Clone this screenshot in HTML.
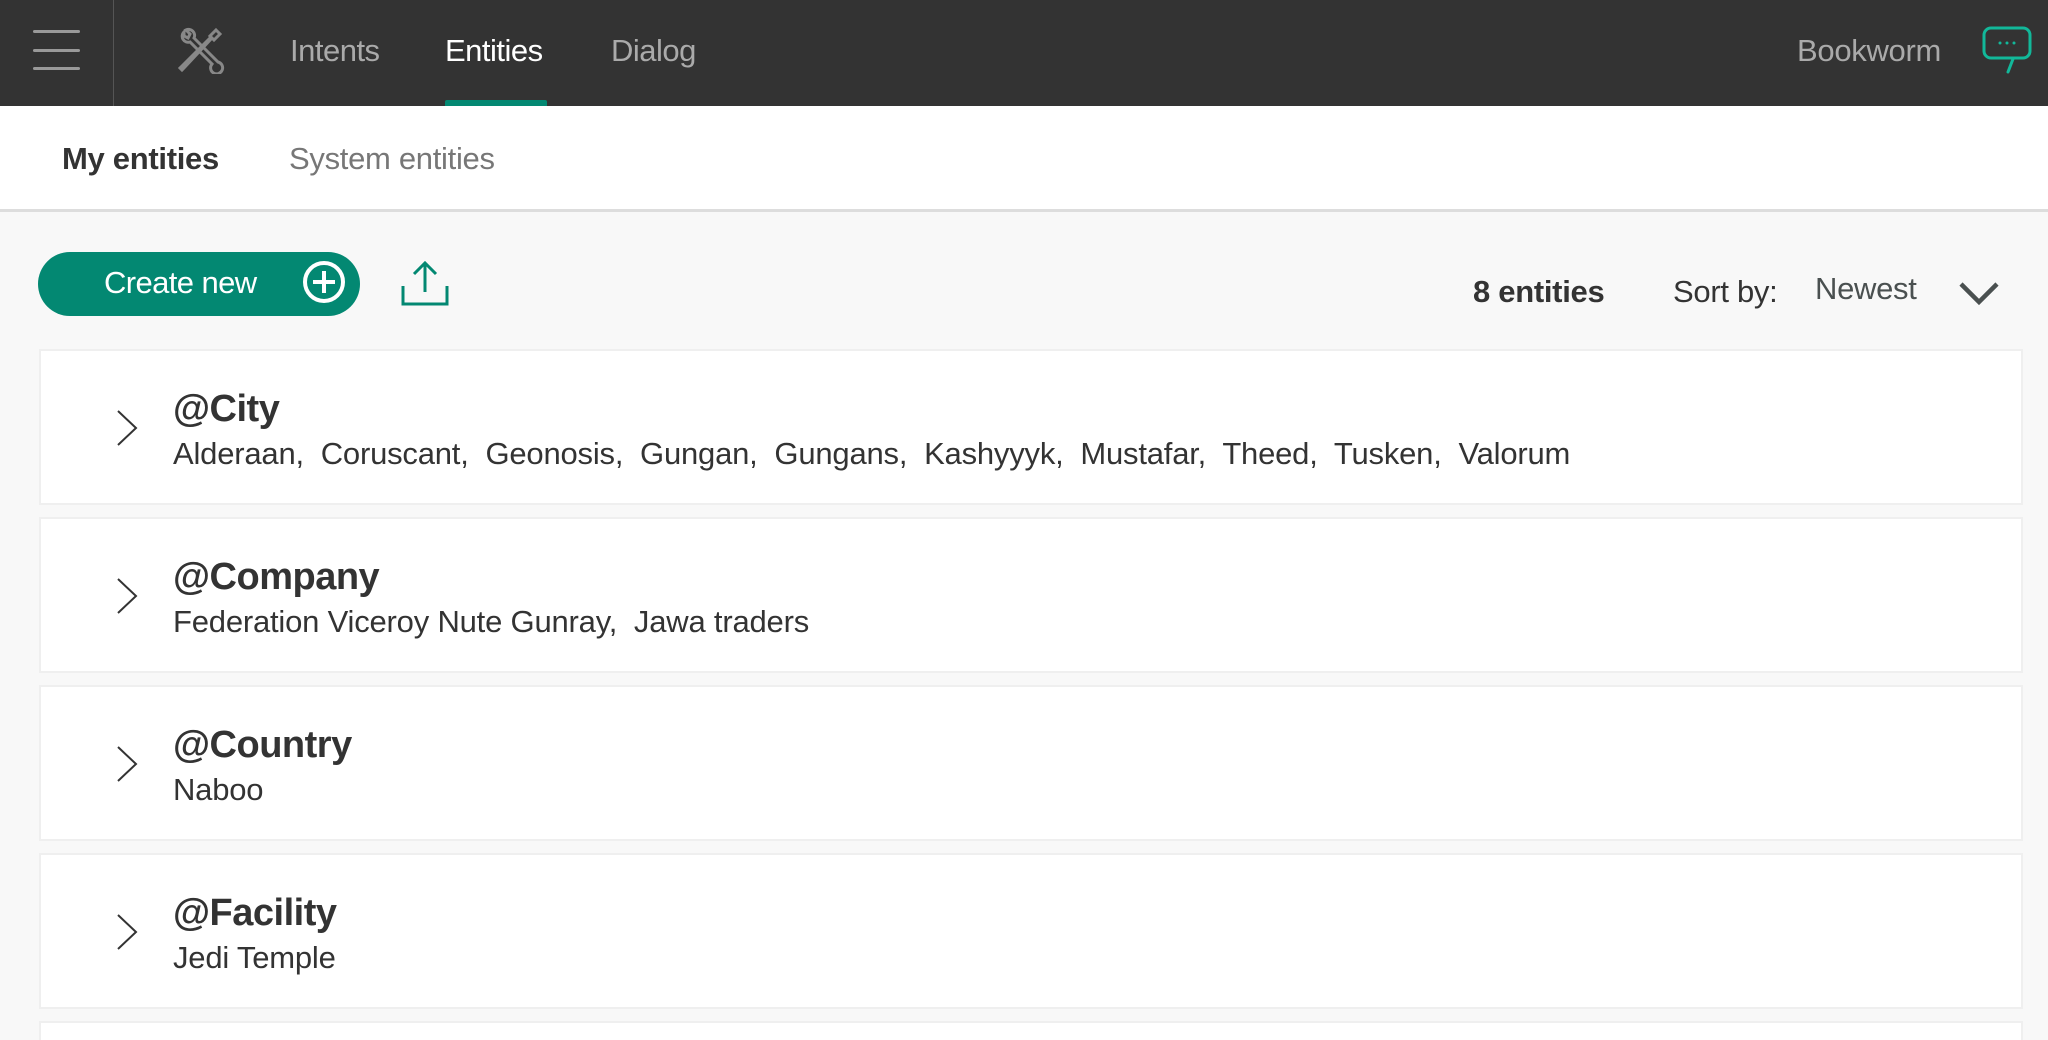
<!DOCTYPE html>
<html><head><meta charset="utf-8"><style>
*{margin:0;padding:0;box-sizing:border-box}
html,body{width:2048px;height:1040px;overflow:hidden}
body{background:#f8f8f8;font-family:"Liberation Sans",Arial,sans-serif;color:#333;position:relative}
.abs{position:absolute;white-space:pre}
.hdr{position:absolute;left:0;top:0;width:2048px;height:106px;background:#333}
.sub{position:absolute;left:0;top:106px;width:2048px;height:106px;background:#fff;border-bottom:3px solid #ddd}
.card{position:absolute;left:39px;width:1984px;height:156px;background:#fff;border:2px solid #efefef}
.t{position:absolute;left:132px;top:37px;font-size:38px;font-weight:bold;color:#333;letter-spacing:-0.5px}
.v{position:absolute;left:132px;top:85px;font-size:31px;color:#333;white-space:pre;letter-spacing:-0.2px}
.chev{position:absolute;left:74px;top:58px}
</style></head><body>
<div class="hdr">
 <div style="position:absolute;left:33px;top:30px;width:47px;height:3px;background:#999;border-radius:2px"></div>
 <div style="position:absolute;left:33px;top:49px;width:47px;height:3px;background:#999;border-radius:2px"></div>
 <div style="position:absolute;left:33px;top:67px;width:47px;height:3px;background:#999;border-radius:2px"></div>
 <div style="position:absolute;left:113px;top:0;width:1px;height:106px;background:#555"></div>
 <svg style="position:absolute;left:176px;top:26px" width="50" height="48" viewBox="0 0 50 48" fill="none" stroke="#888" stroke-width="3" stroke-linecap="round">
  <path d="M40 4 L44 8 L38 14 L34 10 Z M36 12 L8 42 L6 44 L4 42 L6 40 L34 12"/>
  <path d="M8 6 a6 6 0 0 0 6 10 L36 38 a6 6 0 1 0 6 -2 L18 12 a6 6 0 0 0 -8 -8 l4 4 -2 4 -4 -2z"/>
 </svg>
 <div class="abs" style="left:290px;top:33px;font-size:31px;color:#aaa;letter-spacing:-0.5px">Intents</div>
 <div class="abs" style="left:445px;top:33px;font-size:31px;color:#fff;letter-spacing:-0.5px">Entities</div>
 <div style="position:absolute;left:445px;top:100px;width:102px;height:6px;background:#038872;border-radius:2px 2px 0 0"></div>
 <div class="abs" style="left:611px;top:33px;font-size:31px;color:#aaa;letter-spacing:-0.5px">Dialog</div>
 <div class="abs" style="left:1797px;top:33px;font-size:31px;color:#aaa;letter-spacing:-0.3px">Bookworm</div>
 <svg style="position:absolute;left:1982px;top:25px" width="52" height="52" viewBox="0 0 52 52" fill="none" stroke="#12b89a" stroke-width="3" stroke-linecap="round" stroke-linejoin="round">
  <rect x="2" y="3" width="46" height="30" rx="7"/>
  <path d="M31 34 L26 47"/>
  <circle cx="18" cy="18" r="1.5" fill="#12b89a" stroke="none"/><circle cx="25" cy="18" r="1.5" fill="#12b89a" stroke="none"/><circle cx="32" cy="18" r="1.5" fill="#12b89a" stroke="none"/>
 </svg>
</div>
<div class="sub">
 <div class="abs" style="left:62px;top:35px;font-size:31px;font-weight:bold;color:#333;letter-spacing:-0.3px">My entities</div>
 <div class="abs" style="left:289px;top:35px;font-size:31px;color:#777;letter-spacing:-0.3px">System entities</div>
</div>
<div style="position:absolute;left:38px;top:252px;width:322px;height:64px;border-radius:32px;background:#038872"></div>
<div class="abs" style="left:104px;top:265px;font-size:31px;color:#fff;letter-spacing:-0.6px">Create new</div>
<svg style="position:absolute;left:301px;top:259px" width="46" height="46" viewBox="0 0 46 46" fill="none" stroke="#fff" stroke-width="4"><circle cx="23" cy="23" r="19"/><path d="M23 12V34M12 23H34"/></svg>
<svg style="position:absolute;left:401px;top:260px" width="48" height="48" viewBox="0 0 48 48" fill="none" stroke="#038872" stroke-width="3"><path d="M2 26V44H46V26M24 32V4M13 14L24 3 35 14"/></svg>
<div class="abs" style="left:1473px;top:274px;font-size:31px;font-weight:bold;color:#333;letter-spacing:-0.3px">8 entities</div>
<div class="abs" style="left:1673px;top:274px;font-size:31px;color:#333;letter-spacing:-0.3px">Sort by:</div>
<div class="abs" style="left:1815px;top:271px;font-size:31px;color:#4a5050;letter-spacing:-0.3px">Newest</div>
<svg style="position:absolute;left:1958px;top:280px" width="42" height="26" viewBox="0 0 42 26" fill="none" stroke="#4a5050" stroke-width="4.5"><path d="M3 4L21 22 39 4"/></svg>

<div class="card" style="top:349px">
 <svg class="chev" width="24" height="38" viewBox="0 0 24 38" fill="none" stroke="#333" stroke-width="2"><path d="M3 2L21 19 3 36"/></svg>
 <div class="t">@City</div>
 <div class="v">Alderaan,  Coruscant,  Geonosis,  Gungan,  Gungans,  Kashyyyk,  Mustafar,  Theed,  Tusken,  Valorum</div>
</div>
<div class="card" style="top:517px">
 <svg class="chev" width="24" height="38" viewBox="0 0 24 38" fill="none" stroke="#333" stroke-width="2"><path d="M3 2L21 19 3 36"/></svg>
 <div class="t">@Company</div>
 <div class="v">Federation Viceroy Nute Gunray,  Jawa traders</div>
</div>
<div class="card" style="top:685px">
 <svg class="chev" width="24" height="38" viewBox="0 0 24 38" fill="none" stroke="#333" stroke-width="2"><path d="M3 2L21 19 3 36"/></svg>
 <div class="t">@Country</div>
 <div class="v">Naboo</div>
</div>
<div class="card" style="top:853px">
 <svg class="chev" width="24" height="38" viewBox="0 0 24 38" fill="none" stroke="#333" stroke-width="2"><path d="M3 2L21 19 3 36"/></svg>
 <div class="t">@Facility</div>
 <div class="v">Jedi Temple</div>
</div>
<div class="card" style="top:1021px;height:19px;border-bottom:none"></div>
</body></html>
